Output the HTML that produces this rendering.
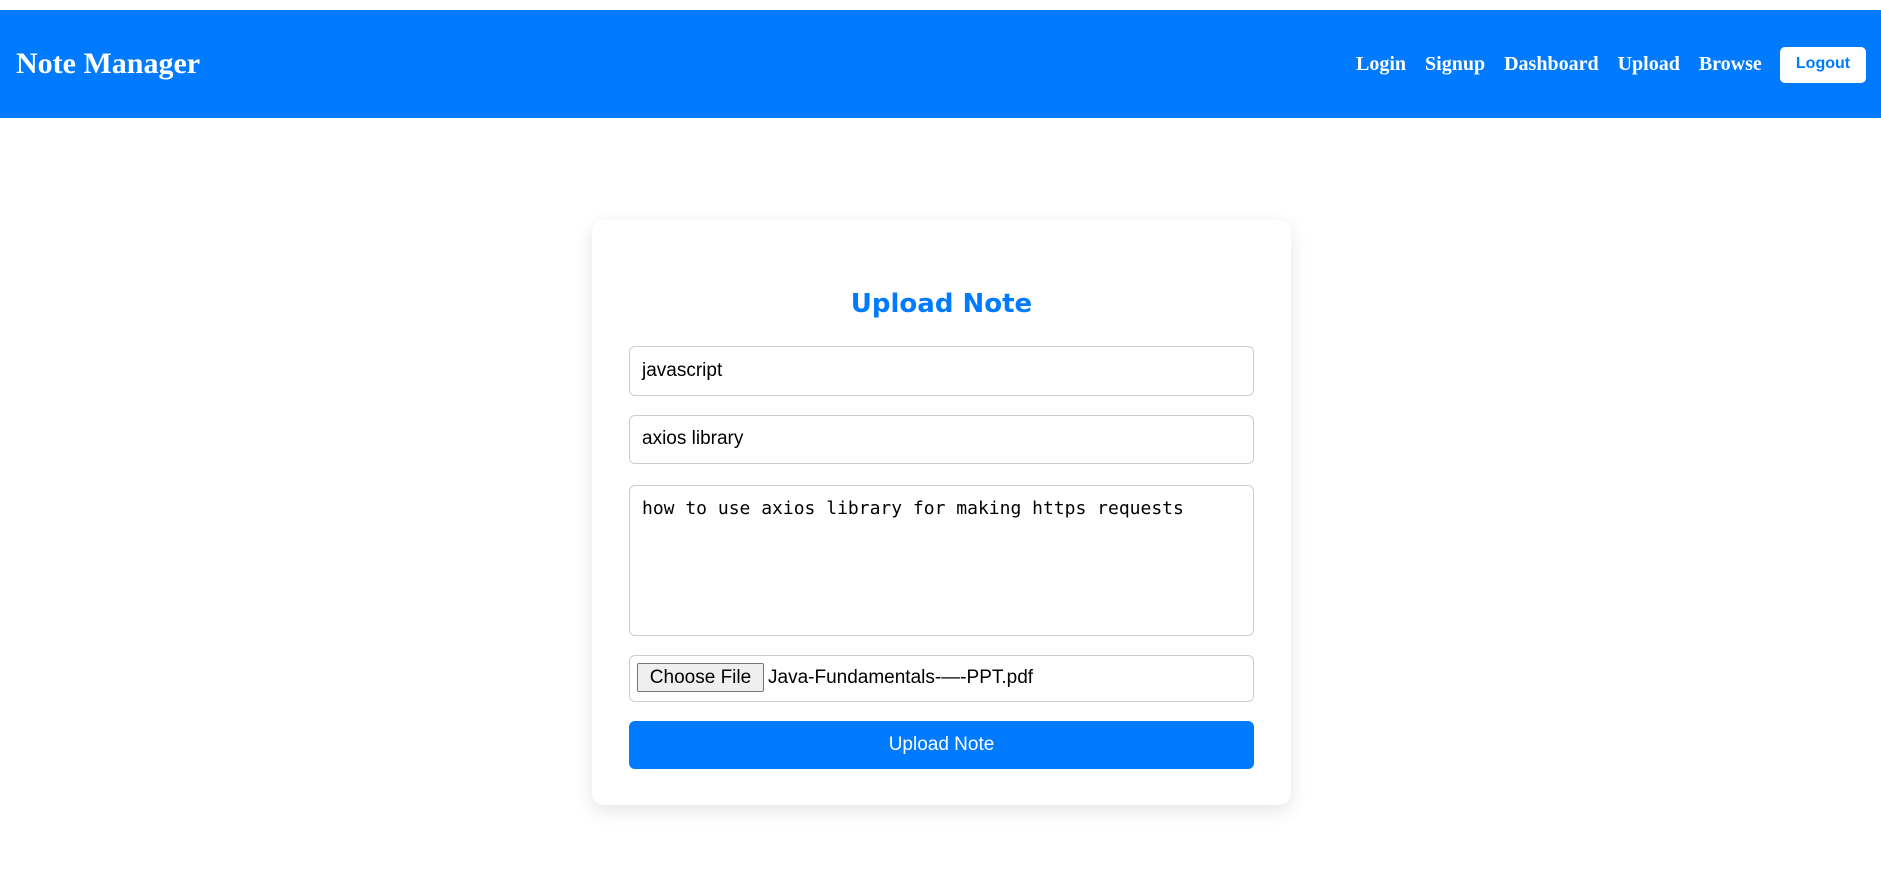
<!DOCTYPE html>
<html><head><meta charset="utf-8"><style>
*{box-sizing:border-box;margin:0;padding:0}
body{width:1881px;height:886px;background:#fff;position:relative;overflow:hidden;font-family:"Liberation Sans",Arial,sans-serif}
.nav{position:absolute;left:0;top:10px;width:1881px;height:108px;background:#007bff}
.title{position:absolute;left:16px;top:34px;font:bold 30px "Liberation Serif",serif;color:#fff;line-height:40px}
.links{position:absolute;left:1356px;top:40px;font:bold 20px "Liberation Serif",serif;color:#fff;line-height:28px;white-space:nowrap}
.links span{margin-right:19px}
.logout{position:absolute;left:1780px;top:37px;width:86px;height:36px;background:#fff;border-radius:5px;color:#007bff;font:bold 16px "Liberation Sans",sans-serif;text-align:center;line-height:34px}
.card{position:absolute;left:592px;top:220px;width:699px;height:585px;background:#fff;border-radius:12px;box-shadow:0 6px 18px rgba(0,0,0,0.1)}
h2{position:absolute;left:0;width:699px;top:64px;text-align:center;color:#007bff;font:bold 26px "DejaVu Sans","Liberation Sans",sans-serif;line-height:40px}
.f{position:absolute;left:37px;width:625px;border:1.5px solid #ccc;border-radius:6px;font-size:19px;color:#000;padding-left:12px}
.mono{font-family:"DejaVu Sans Mono","Liberation Mono",monospace;font-size:18px}
.choose{display:inline-block;position:absolute;left:7px;top:7px;width:127px;height:29px;border:1px solid #767676;background:#efefef;border-radius:2px;font-size:19px;line-height:27px;text-align:center}
.btn{position:absolute;left:37px;top:501px;width:625px;height:48px;background:#007bff;border-radius:6px;color:#fff;font-size:19px;text-align:center;line-height:48px}
</style></head><body>
<div class="nav">
<div class="title">Note Manager</div>
<div class="links"><span>Login</span><span>Signup</span><span>Dashboard</span><span>Upload</span><span>Browse</span></div>
<div class="logout">Logout</div>
</div>
<div class="card">
<h2>Upload Note</h2>
<div class="f" style="top:126px;height:50px;line-height:47px">javascript</div>
<div class="f" style="top:195px;height:49px;line-height:46px">axios library</div>
<div class="f mono" style="top:265px;height:151px;padding-top:11px;line-height:24px">how to use axios library for making https requests</div>
<div class="f" style="top:435px;height:47px;line-height:44px"><span class="choose">Choose File</span><span style="position:absolute;left:138px">Java-Fundamentals-—-PPT.pdf</span></div>
<div class="btn">Upload Note</div>
</div>
</body></html>
